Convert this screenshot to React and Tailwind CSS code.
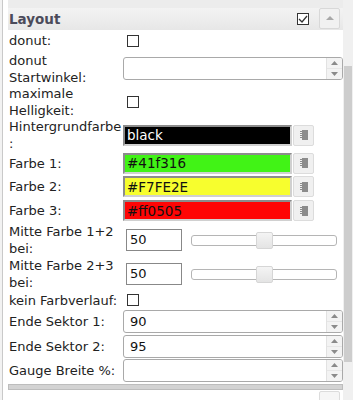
import React from 'react'

const font = { fontFamily: '"DejaVu Sans", Verdana, sans-serif' }

function Spinner() {
  return (
    <div className="flex h-full w-[16px] flex-col border-l border-[#e2e2e2] bg-[#f3f3f3]">
      <div className="flex flex-1 items-center justify-center border-b border-[#e6e6e6]">
        <svg width="7" height="4" viewBox="0 0 7 4"><path d="M0 4 L3.5 0 L7 4 Z" fill="#8a8a8a" /></svg>
      </div>
      <div className="flex flex-1 items-center justify-center">
        <svg width="7" height="4" viewBox="0 0 7 4"><path d="M0 0 L3.5 4 L7 0 Z" fill="#8a8a8a" /></svg>
      </div>
    </div>
  )
}

function NumberField({ value }) {
  return (
    <div className="flex h-[23px] w-[220px] items-center overflow-hidden rounded-[3px] border border-[#a9a9a9] bg-white">
      <span className="flex-1 pl-[6px] text-[13px] text-[#111]">{value}</span>
      <Spinner />
    </div>
  )
}

function Check({ checked }) {
  return (
    <div className="ml-[4px] flex h-[12px] w-[12px] items-center justify-center border border-[#333] bg-white">
      {checked && (
        <svg width="10" height="8" viewBox="0 0 10 8">
          <path d="M1 4 L4 7 L9 1" stroke="#333" strokeWidth="1.3" fill="none" />
        </svg>
      )}
    </div>
  )
}

function ColorField({ value, bg, fg }) {
  return (
    <div className="flex items-center gap-[1px]">
      <div
        className={`flex h-[21px] w-[169px] items-center border-[2px] border-t-[#8c8c8c] border-l-[#8c8c8c] border-r-[#d0d0d0] border-b-[#d0d0d0] pl-[2px] text-[13.5px] ${bg} ${fg}`}
      >
        {value}
      </div>
      <div className="flex h-[21px] w-[21px] items-center justify-center rounded-[2px] border border-[#dcdcdc] bg-[#f0f0f0]">
        <svg width="8" height="10" viewBox="0 0 8 10">
          <rect x="2" y="0" width="6" height="10" fill="#8c8c8c" />
          <rect x="0" y="1" width="2" height="1" fill="#8c8c8c" />
          <rect x="0" y="3" width="2" height="1" fill="#8c8c8c" />
          <rect x="0" y="5" width="2" height="1" fill="#8c8c8c" />
          <rect x="0" y="7" width="2" height="1" fill="#8c8c8c" />
        </svg>
      </div>
    </div>
  )
}

function SliderField({ value }) {
  return (
    <div className="ml-[3px] flex items-center">
      <div className="flex h-[22px] w-[56px] items-center border border-[#888] bg-white pl-[3px] text-[13px] text-[#111]">
        {value}
      </div>
      <div className="ml-[9px] flex h-[11px] w-[146px] items-center rounded-[3px] border border-[#b5b5b5] bg-white">
        <div className="ml-[64px] h-[17px] w-[17px] rounded-[2px] border border-[#d6d6d6] bg-gradient-to-b from-[#f4f4f4] to-[#e4e4e4]" />
      </div>
    </div>
  )
}

function Row({ label, h, children }) {
  return (
    <div className={`flex items-center ${h}`}>
      <div className="w-[115px] shrink-0 break-words pl-[1px] leading-[17px] text-[#222]">{label}</div>
      {children}
    </div>
  )
}

export default function App() {
  return (
    <div className="flex h-[400px] w-[353px] overflow-hidden bg-white text-[13px]" style={font}>
      {/* left edge */}
      <div className="flex w-[8px] shrink-0 bg-white">
        <div className="w-[2px] bg-[#f2f2f2]" />
        <div className="w-[1px] bg-[#c9c9c9]" />
      </div>

      {/* panel */}
      <div className="flex w-[335px] shrink-0 flex-col">
        <div className="h-[8px] shrink-0 bg-[#ececec]" />
        <div className="flex h-[22px] shrink-0 items-center bg-gradient-to-b from-[#f3f3f3] to-[#e7e7e7]">
          <span className="flex-1 pl-[1px] text-[13.5px] font-bold text-[#4b4b5a]">Layout</span>
          <Check checked />
          <div className="ml-[10px] mr-[3px] flex h-[21px] w-[21px] -translate-y-[1px] items-center justify-center rounded-[2px] border border-[#d8d8d8] bg-[#f1f1f1]">
            <svg width="8" height="4" viewBox="0 0 8 4"><path d="M0 4 L4 0 L8 4 Z" fill="#a8a8a8" /></svg>
          </div>
        </div>

        <Row label="donut:" h="h-[22px]"><Check /></Row>
        <Row label="donut Startwinkel:" h="h-[35px]"><NumberField value="" /></Row>
        <Row label="maximale Helligkeit:" h="h-[33px]"><Check /></Row>
        <Row label="Hintergrundfarbe:" h="h-[33px]">
          <ColorField value="black" bg="bg-black" fg="text-white" />
        </Row>
        <Row label="Farbe 1:" h="h-[24px]">
          <ColorField value="#41f316" bg="bg-[#41f316]" fg="text-[#111]" />
        </Row>
        <Row label="Farbe 2:" h="h-[24px]">
          <ColorField value="#F7FE2E" bg="bg-[#f7fe2e]" fg="text-[#111]" />
        </Row>
        <Row label="Farbe 3:" h="h-[25px]">
          <ColorField value="#ff0505" bg="bg-[#ff0505]" fg="text-[#111]" />
        </Row>
        <Row label="Mitte Farbe 1+2 bei:" h="h-[35px]"><SliderField value="50" /></Row>
        <Row label="Mitte Farbe 2+3 bei:" h="h-[34px]"><SliderField value="50" /></Row>
        <Row label="kein Farbverlauf:" h="h-[19px]"><Check /></Row>
        <Row label="Ende Sektor 1:" h="h-[25px]"><NumberField value="90" /></Row>
        <Row label="Ende Sektor 2:" h="h-[25px]"><NumberField value="95" /></Row>
        <Row label="Gauge Breite %:" h="h-[25px]"><NumberField value="" /></Row>

        <div className="mt-[1px] h-[6px] shrink-0 border border-[#bdbdbd] bg-[#d3d3d3]" />
        <div className="flex h-[10px] shrink-0 justify-end bg-white pt-[1px]">
          <div className="mr-[3px] h-[21px] w-[21px] rounded-[2px] border border-[#dcdcdc] bg-[#f6f6f6]" />
        </div>
      </div>

      {/* scrollbar */}
      <div className="flex w-[10px] shrink-0 justify-center bg-[#f0f0f0]">
        <div className="mt-[66px] h-[296px] w-[8px] bg-[#cdcdcd]" />
      </div>
    </div>
  )
}
